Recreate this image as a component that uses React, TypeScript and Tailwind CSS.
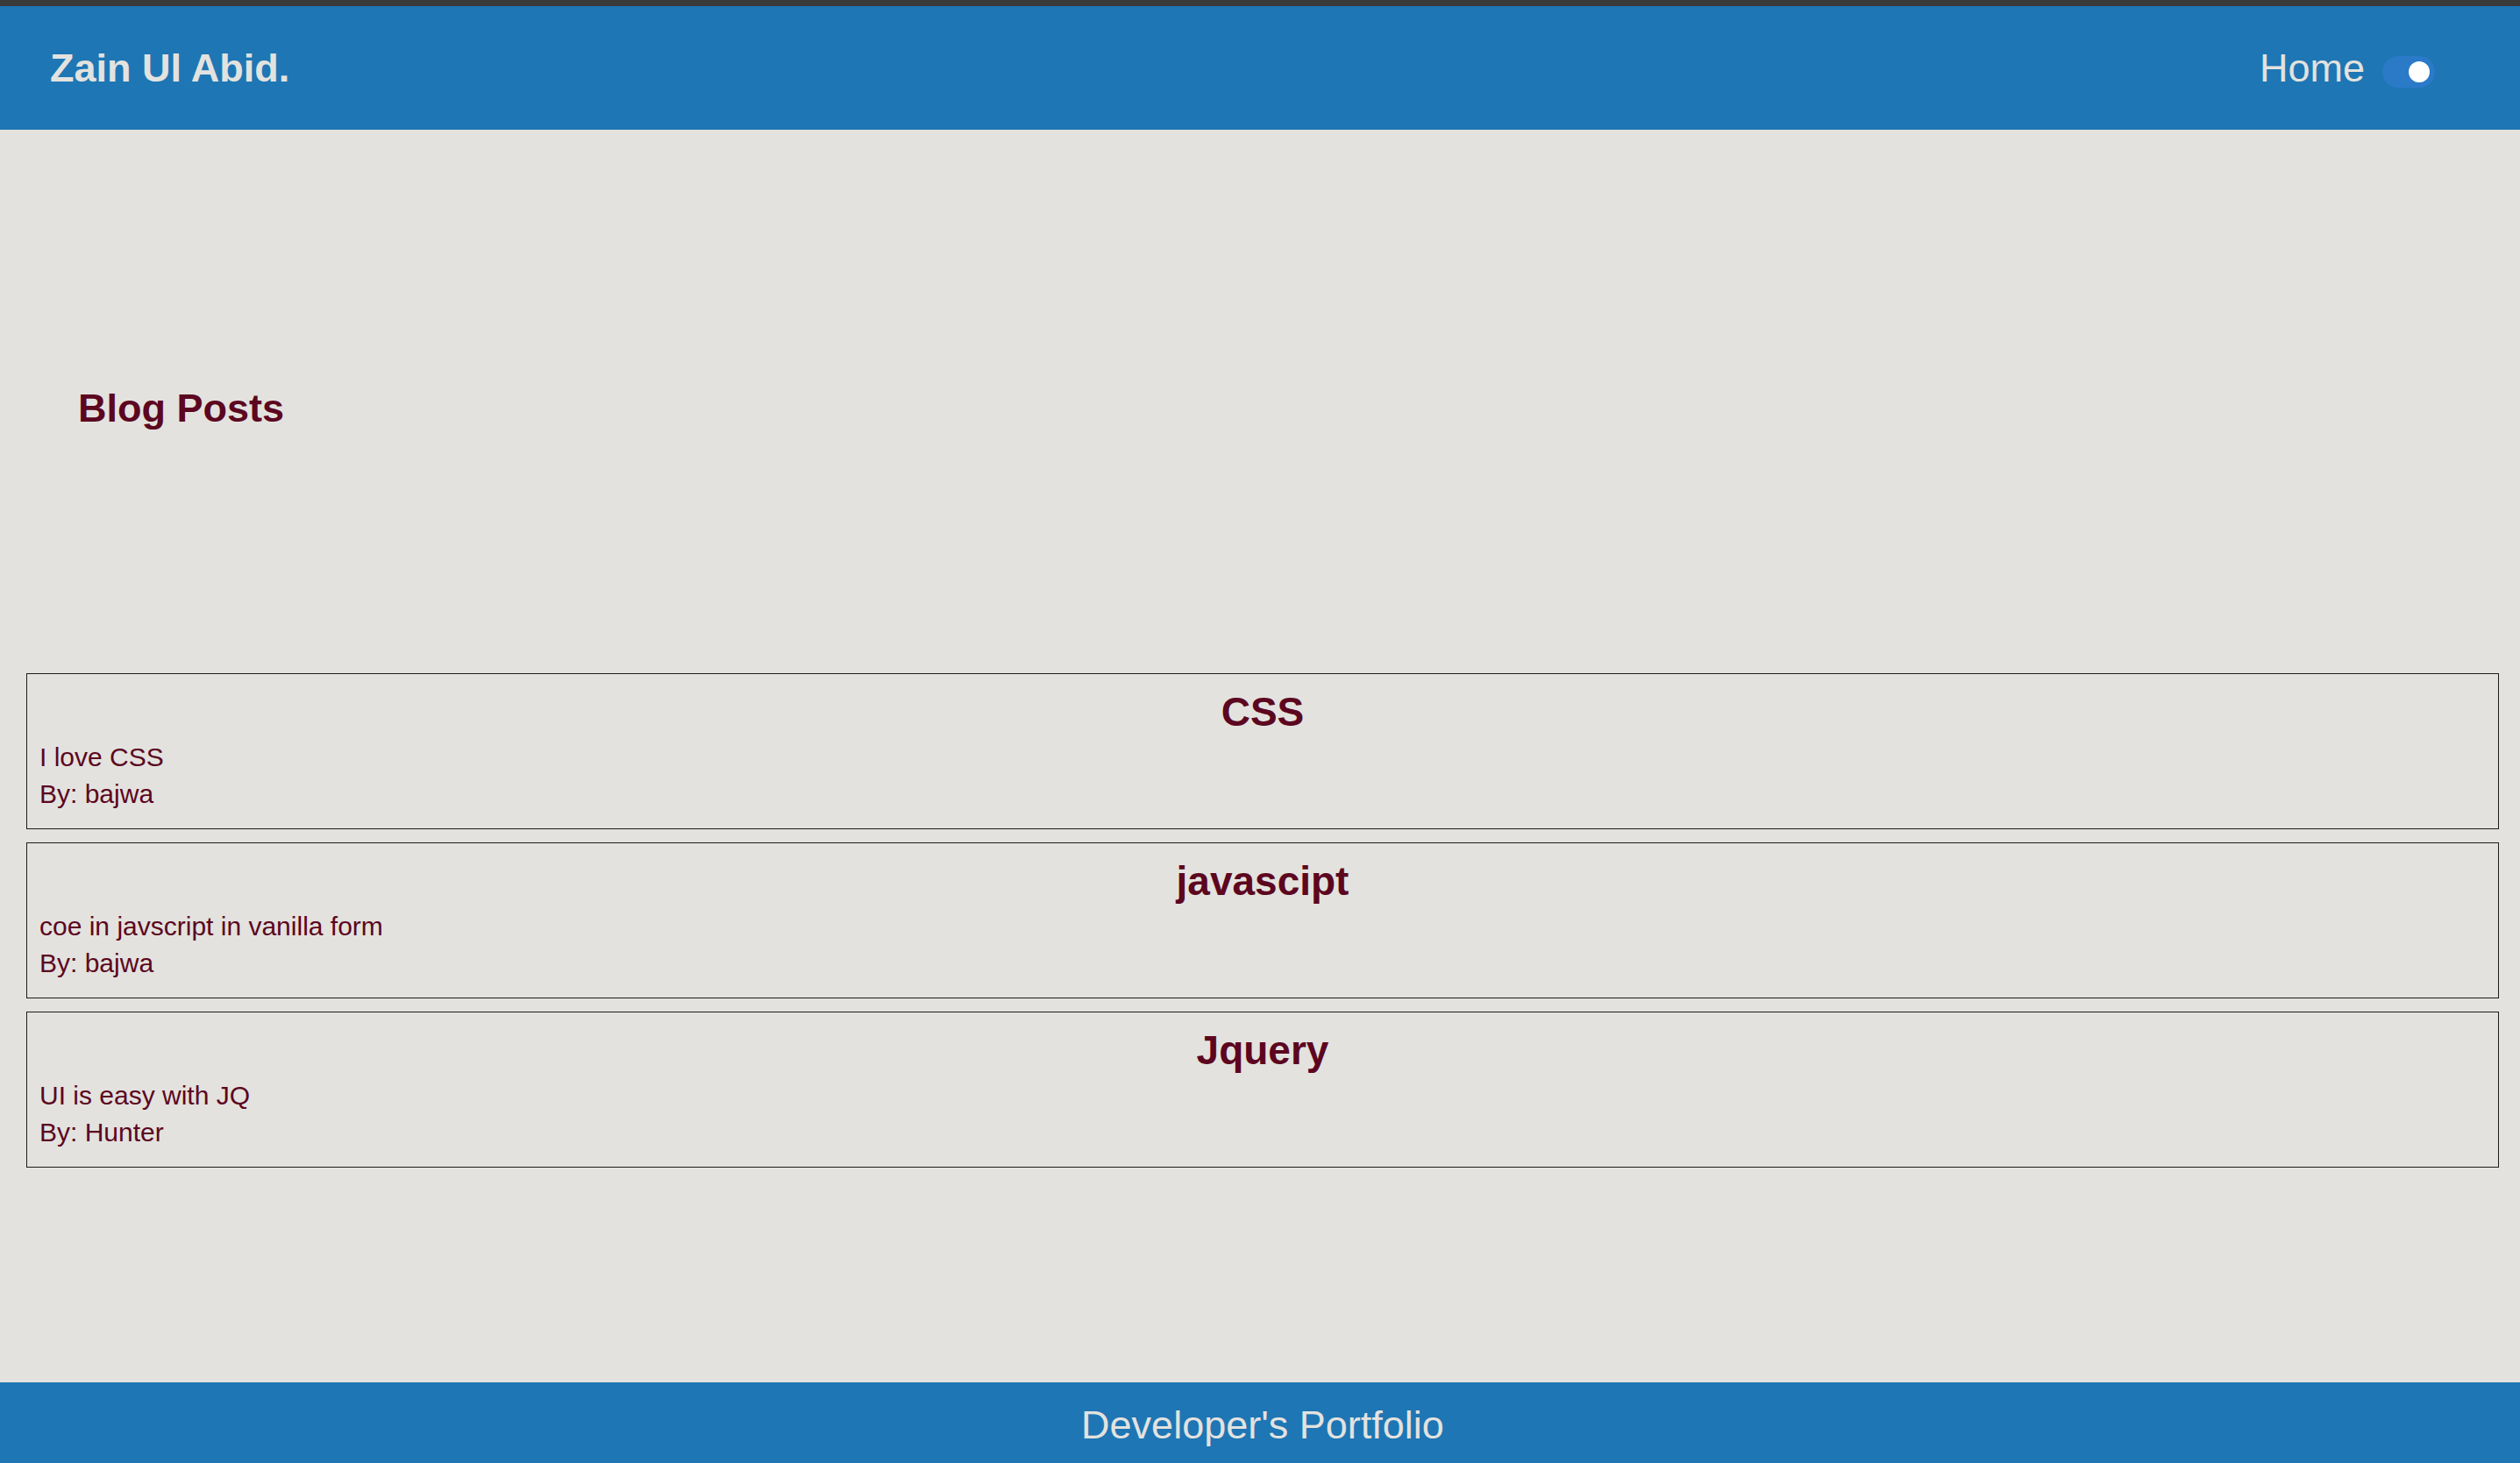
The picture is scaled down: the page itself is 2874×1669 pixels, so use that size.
import React from "react"

const posts = [
    { title: "CSS", body: "I love CSS", author: "bajwa" },
    { title: "javascipt", body: "coe in javscript in vanilla form", author: "bajwa" },
    { title: "Jquery", body: "UI is easy with JQ", author: "Hunter" },
]

function Toggle() {
    return (
        <div className="mt-2 flex h-[36px] w-[60px] items-center justify-end rounded-full bg-[#2a7ac8] pr-[6px]">
            <div className="h-[24px] w-[24px] rounded-full bg-white"></div>
        </div>
    )
}

export default function App() {
    return (
        <div
            className="flex min-h-screen flex-col bg-[#e3e2df] text-[#5c0620]"
            style={{ fontFamily: '"Liberation Sans", Arial, sans-serif' }}
        >
            <div className="h-[7px] bg-[#3a3a3a]"></div>
            <header className="flex h-[141px] items-center justify-between bg-[#1e76b4] pl-[57px] pr-[97px] text-[#e3e2df]">
                <h1 className="text-[45px] font-bold leading-[50px]">Zain Ul Abid.</h1>
                <nav className="flex items-center gap-5">
                    <a className="text-[45px] leading-[50px]">Home</a>
                    <Toggle />
                </nav>
            </header>

            <main className="flex-1">
                <div className="pl-[89px] pt-[293px]">
                    <h2 className="text-[45px] font-bold leading-[50px]">Blog Posts</h2>
                </div>

                <div className="ml-[30px] mr-[24px] mt-[277px] flex flex-col gap-[15px]">
                    {posts.map((post) => (
                        <div key={post.title} className="border border-[#1c1c1c] px-[14px] pb-[18px] pt-[18px]">
                            <h3 className="text-center text-[46px] font-bold leading-[50px]">{post.title}</h3>
                            <p className="mt-[6px] text-[30px] leading-[42px]">{post.body}</p>
                            <p className="text-[30px] leading-[42px]">By: {post.author}</p>
                        </div>
                    ))}
                </div>
            </main>

            <footer className="flex h-[92px] items-center justify-center bg-[#1e76b4] pl-[6px] pt-[6px] text-[45px] leading-[50px] text-[#e3e2df]">
                Developer's Portfolio
            </footer>
        </div>
    )
}
